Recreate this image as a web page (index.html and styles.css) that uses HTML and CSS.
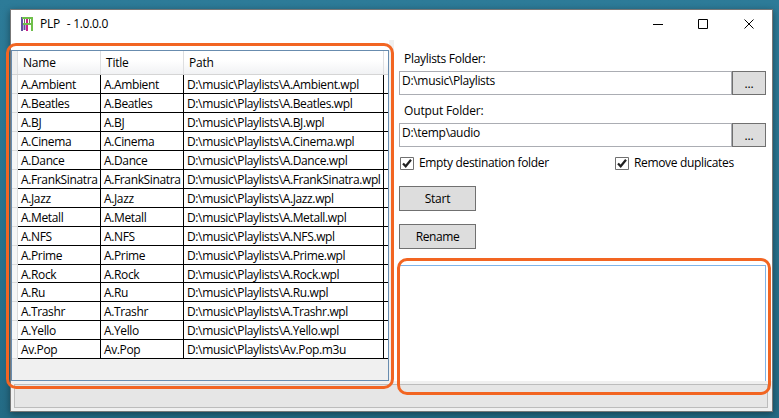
FILE: index.html
```html
<!DOCTYPE html>
<html lang="en">
<head>
<meta charset="utf-8">
<title>PLP - 1.0.0.0</title>
<link rel="stylesheet" href="styles.css">
</head>
<body>
<div class="window">
  <header class="titlebar">
    <svg class="logo" width="12" height="14" viewBox="0 0 12 14" fill="none" stroke-width="2">
      <path stroke="#6250a0" d="M1 0v14M3.500 8v5"/>
      <path stroke="#c9208a" d="M6 2v12"/>
      <path stroke="#6fbf4b" d="M1 1h10v13M2 7h9"/>
      <path stroke="#6a7a5a" stroke-width="1" d="M3.500 2v4M8.500 2v4"/>
    </svg>
    <span class="title">PLP<span class="version">- 1.0.0.0</span></span>
    <svg class="controls" width="105" height="12" viewBox="0 0 105 12" fill="none" stroke="#000">
      <path d="M0 5.5h10M45.500 .5h9v9h-9z"/>
      <path d="M91.500 .5l9 9M100.500 .5l-9 9"/>
    </svg>
  </header>
  <main class="content">
    <section class="grid-panel">
      <div class="grid-head"><span></span><span>Name</span><span>Title</span><span>Path</span><span></span></div>
      <div class="rows" id="rows"></div>
    </section>
    <div class="splitter"></div>
    <section class="form">
      <label class="caption">Playlists Folder:</label>
      <div class="field"><div class="input">D:\music\Playlists</div><div class="browse">...</div></div>
      <label class="caption second">Output Folder:</label>
      <div class="field"><div class="input">D:\temp\audio</div><div class="browse">...</div></div>
      <div class="checks">
        <div class="check"><svg width="14" height="13" viewBox="0 0 14 13"><path class="box" d="M.5 .5h13v12H.5z"/><path class="tick" d="M3 6.500l2.700 2.800L11 2.800"/></svg><span>Empty destination folder</span></div>
        <div class="check"><svg width="14" height="13" viewBox="0 0 14 13"><path class="box" d="M.5 .5h13v12H.5z"/><path class="tick" d="M3 6.500l2.700 2.800L11 2.800"/></svg><span>Remove duplicates</span></div>
      </div>
      <div class="button">Start</div>
      <div class="button rename">Rename</div>
      <div class="log"></div>
    </section>
  </main>
  <footer class="status"><div class="progress"></div></footer>
</div>
<div class="mark mark-grid"></div>
<div class="mark mark-log"></div>
<script src="app.js"></script>
</body>
</html>
```
FILE: styles.css
```css
* { box-sizing: border-box; }
body {
  margin: 0;
  width: 779px;
  height: 418px;
  padding: 9px 6px 6px 10px;
  overflow: hidden;
  background: linear-gradient(#2d7b98, #246b85);
  font: 12px/16px "Open Sans", sans-serif;
  letter-spacing: -0.22px;
  color: #000;
}
.window {
  width: 763px;
  height: 403px;
  border: 1px solid #777;
  background: #fff;
  display: flex;
  flex-direction: column;
  box-shadow: 0 2px 7px rgba(0, 0, 0, .4);
}
.titlebar { height: 30px; display: flex; align-items: flex-start; padding-left: 10px; }
.logo { margin-top: 7px; }
.title { display: flex; gap: 7px; margin: 6px 0 0 7px; letter-spacing: -0.3px; }
.controls { margin: 9px 14px 0 auto; }
.content { height: 341px; display: flex; }
.grid-panel {
  width: 378px;
  height: 331px;
  margin-top: 10px;
  border: 1px solid #688caf;
  background: #f0f0f0;
}
.grid-head, .row { display: grid; grid-template-columns: 6px 83px 83px 200px 4px; }
.grid-head { height: 24px; background: linear-gradient(#fff 40%, #f1f2f4); border-bottom: 1px solid #d5d5d5; }
.grid-head span { border-right: 1px solid #dedfe1; padding: 4px 0 0 5px; }
.grid-head span:first-child { padding: 0; background: #f0f0f0; }
.grid-head span:last-child { border: 0; padding: 0; }
.row { height: 19px; grid-template-rows: 100%; letter-spacing: -0.37px; }
.row:nth-child(11) { height: 18px; }
.row span { background: #fff; border-right: 1px solid #000; border-bottom: 1px solid #000; padding: 1px 0 0 3px; white-space: nowrap; line-height: 17px; }
.row span:first-child { padding: 0; background: #f6f6f6; border-color: #dcdcdc; }
.row span:last-child { border-right: 0; padding: 0; }
.splitter { width: 5px; background: #f0f0f0; }
.form { width: 378px; padding: 11px 6px 0 5px; }
.caption { display: block; height: 20px; padding-left: 5px; letter-spacing: -0.3px; }
.caption.second { margin-top: 8px; letter-spacing: -0.15px; }
.field { display: flex; height: 24px; }
.input { width: 333px; border: 1px solid #abadb3; padding: 1px 0 0 2px; letter-spacing: -0.3px; }
.browse { width: 34px; border: 1px solid #707070; background: #ddd; text-align: center; line-height: 24px; }
.checks { display: grid; grid-template-columns: 215px 1fr; margin-top: 8px; padding-left: 1px; letter-spacing: -0.34px; }
.check { display: flex; align-items: center; height: 16px; gap: 5px; }
.box { fill: #fff; stroke: #707070; }
.tick { fill: none; stroke: #212121; stroke-width: 2.200; }
.button { width: 77px; height: 25px; margin-top: 15px; border: 1px solid #707070; background: #ddd; text-align: center; line-height: 23px; }
.button.rename { margin-top: 13px; letter-spacing: -0.4px; }
.log { height: 116px; margin-top: 16px; border: solid #7eb4ea; border-width: 1px 1px 0; }
.status { flex: 1; background: #f0f0f0; padding: 3px 4px 3px 3px; }
.progress { height: 24px; border: 1px solid #bcbcbc; background: #e6e6e6; }
.mark { position: absolute; border: 3px solid #f26522; border-radius: 10px; }
.mark-grid { left: 6px; top: 43px; width: 388px; height: 346px; }
.mark-log { left: 397px; top: 258px; width: 374px; height: 137px; }
```
FILE: app.js
```js
const names = ["A.Ambient", "A.Beatles", "A.BJ", "A.Cinema", "A.Dance", "A.FrankSinatra", "A.Jazz", "A.Metall", "A.NFS", "A.Prime", "A.Rock", "A.Ru", "A.Trashr", "A.Yello", "Av.Pop"];
document.getElementById("rows").innerHTML = names.map(name => {
  const ext = name === "Av.Pop" ? "m3u" : "wpl";
  return `<div class="row"><span></span><span>${name}</span><span>${name}</span><span>D:\\music\\Playlists\\${name}.${ext}</span><span></span></div>`;
}).join("");
```
